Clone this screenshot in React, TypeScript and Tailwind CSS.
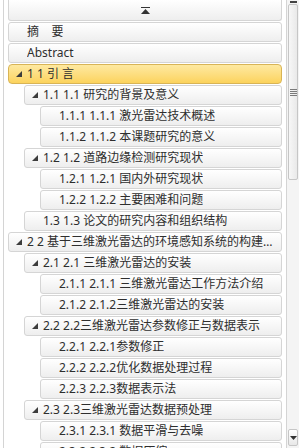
import React from "react";

type Row = { text: string; level: number; arrow?: boolean; active?: boolean };

const rows: Row[] = [
  { text: "摘    要", level: 0 },
  { text: "Abstract", level: 0 },
  { text: "1 1 引 言", level: 0, arrow: true, active: true },
  { text: "1.1 1.1 研究的背景及意义", level: 1, arrow: true },
  { text: "1.1.1 1.1.1 激光雷达技术概述", level: 2 },
  { text: "1.1.2 1.1.2 本课题研究的意义", level: 2 },
  { text: "1.2 1.2 道路边缘检测研究现状", level: 1, arrow: true },
  { text: "1.2.1 1.2.1 国内外研究现状", level: 2 },
  { text: "1.2.2 1.2.2 主要困难和问题", level: 2 },
  { text: "1.3 1.3 论文的研究内容和组织结构", level: 1 },
  { text: "2 2 基于三维激光雷达的环境感知系统的构建方法研究", level: 0, arrow: true },
  { text: "2.1 2.1 三维激光雷达的安装", level: 1, arrow: true },
  { text: "2.1.1 2.1.1 三维激光雷达工作方法介绍", level: 2 },
  { text: "2.1.2 2.1.2三维激光雷达的安装", level: 2 },
  { text: "2.2 2.2三维激光雷达参数修正与数据表示", level: 1, arrow: true },
  { text: "2.2.1 2.2.1参数修正", level: 2 },
  { text: "2.2.2 2.2.2优化数据处理过程", level: 2 },
  { text: "2.2.3 2.2.3数据表示法", level: 2 },
  { text: "2.3 2.3三维激光雷达数据预处理", level: 1, arrow: true },
  { text: "2.3.1 2.3.1 数据平滑与去噪", level: 2 },
  { text: "2.3.2 2.3.2 数据压缩", level: 2 },
];

const indent = ["ml-[4px]", "ml-[20px]", "ml-[36px]"];

function Expander() {
  return (
    <svg width="6" height="6" viewBox="0 0 6 6" className="mr-[5px] shrink-0">
      <polygon points="6,0 6,6 0,6" fill="#3c3c3c" />
    </svg>
  );
}

function TreeRow({ row }: { row: Row }) {
  const box = row.active
    ? "bg-gradient-to-b from-[#fee9a0] to-[#fcd35c] border-[#d8b456] rounded-[4px]"
    : "bg-gradient-to-b from-white to-[#eeeeee] border-[#d5d5d5] rounded-[3px]";
  return (
    <div
      className={`${indent[row.level]} mb-[1px] flex h-[20px] shrink-0 items-center border pl-[7px] pr-[4px] ${box}`}
    >
      {row.arrow ? <Expander /> : <span className="w-[11px] shrink-0" />}
      <span className="truncate whitespace-pre text-[12px] leading-[18px] text-[#2e2e2e]">
        {row.text}
      </span>
    </div>
  );
}

export default function App() {
  return (
    <div
      className="flex h-[448px] w-[299px] overflow-hidden bg-white"
      style={{ fontFamily: '"Noto Sans", "Noto Sans CJK SC", sans-serif' }}
    >
      {/* tree panel */}
      <div className="ml-[3px] flex w-[279px] flex-col border-l border-[#d4d4d4]">
        <div className="mb-[1px] ml-[4px] flex h-[21px] shrink-0 items-center justify-center rounded-b-[3px] border border-t-0 border-[#d5d5d5] bg-gradient-to-b from-white to-[#eeeeee]">
          <svg width="9" height="7" viewBox="0 0 9 7">
            <rect x="0" y="0" width="9" height="1" fill="#333" />
            <polygon points="4.5,2 9,7 0,7" fill="#333" />
          </svg>
        </div>
        {rows.map((r, i) => (
          <TreeRow key={i} row={r} />
        ))}
      </div>

      {/* scrollbar */}
      <div className="ml-[4px] flex w-[13px] flex-col border-l border-[#d4d4d4] bg-[#f4f4f4]">
        <div className="flex h-[3px] items-end justify-center">
          <div className="h-[2px] w-[7px] bg-[#444]" />
        </div>
        <div className="mx-[1px] mt-[1px] flex h-[176px] items-center justify-center rounded-[2px] border border-[#c6c6c6] bg-gradient-to-r from-[#f7f7f7] to-[#e9e9e9]">
          <div className="flex flex-col gap-[1px]">
            <div className="h-[1px] w-[7px] bg-[#7a7a7a]" />
            <div className="h-[1px] w-[7px] bg-[#7a7a7a]" />
            <div className="h-[1px] w-[7px] bg-[#7a7a7a]" />
            <div className="h-[1px] w-[7px] bg-[#7a7a7a]" />
          </div>
        </div>
        <div className="flex-1" />
        <div className="mx-[1px] mb-[2px] flex h-[17px] items-center justify-center rounded-[2px] border border-[#c6c6c6] bg-gradient-to-b from-white to-[#e8e8e8]">
          <svg width="7" height="4" viewBox="0 0 7 4">
            <polygon points="0,0 7,0 3.5,4" fill="#333" />
          </svg>
        </div>
      </div>
    </div>
  );
}
